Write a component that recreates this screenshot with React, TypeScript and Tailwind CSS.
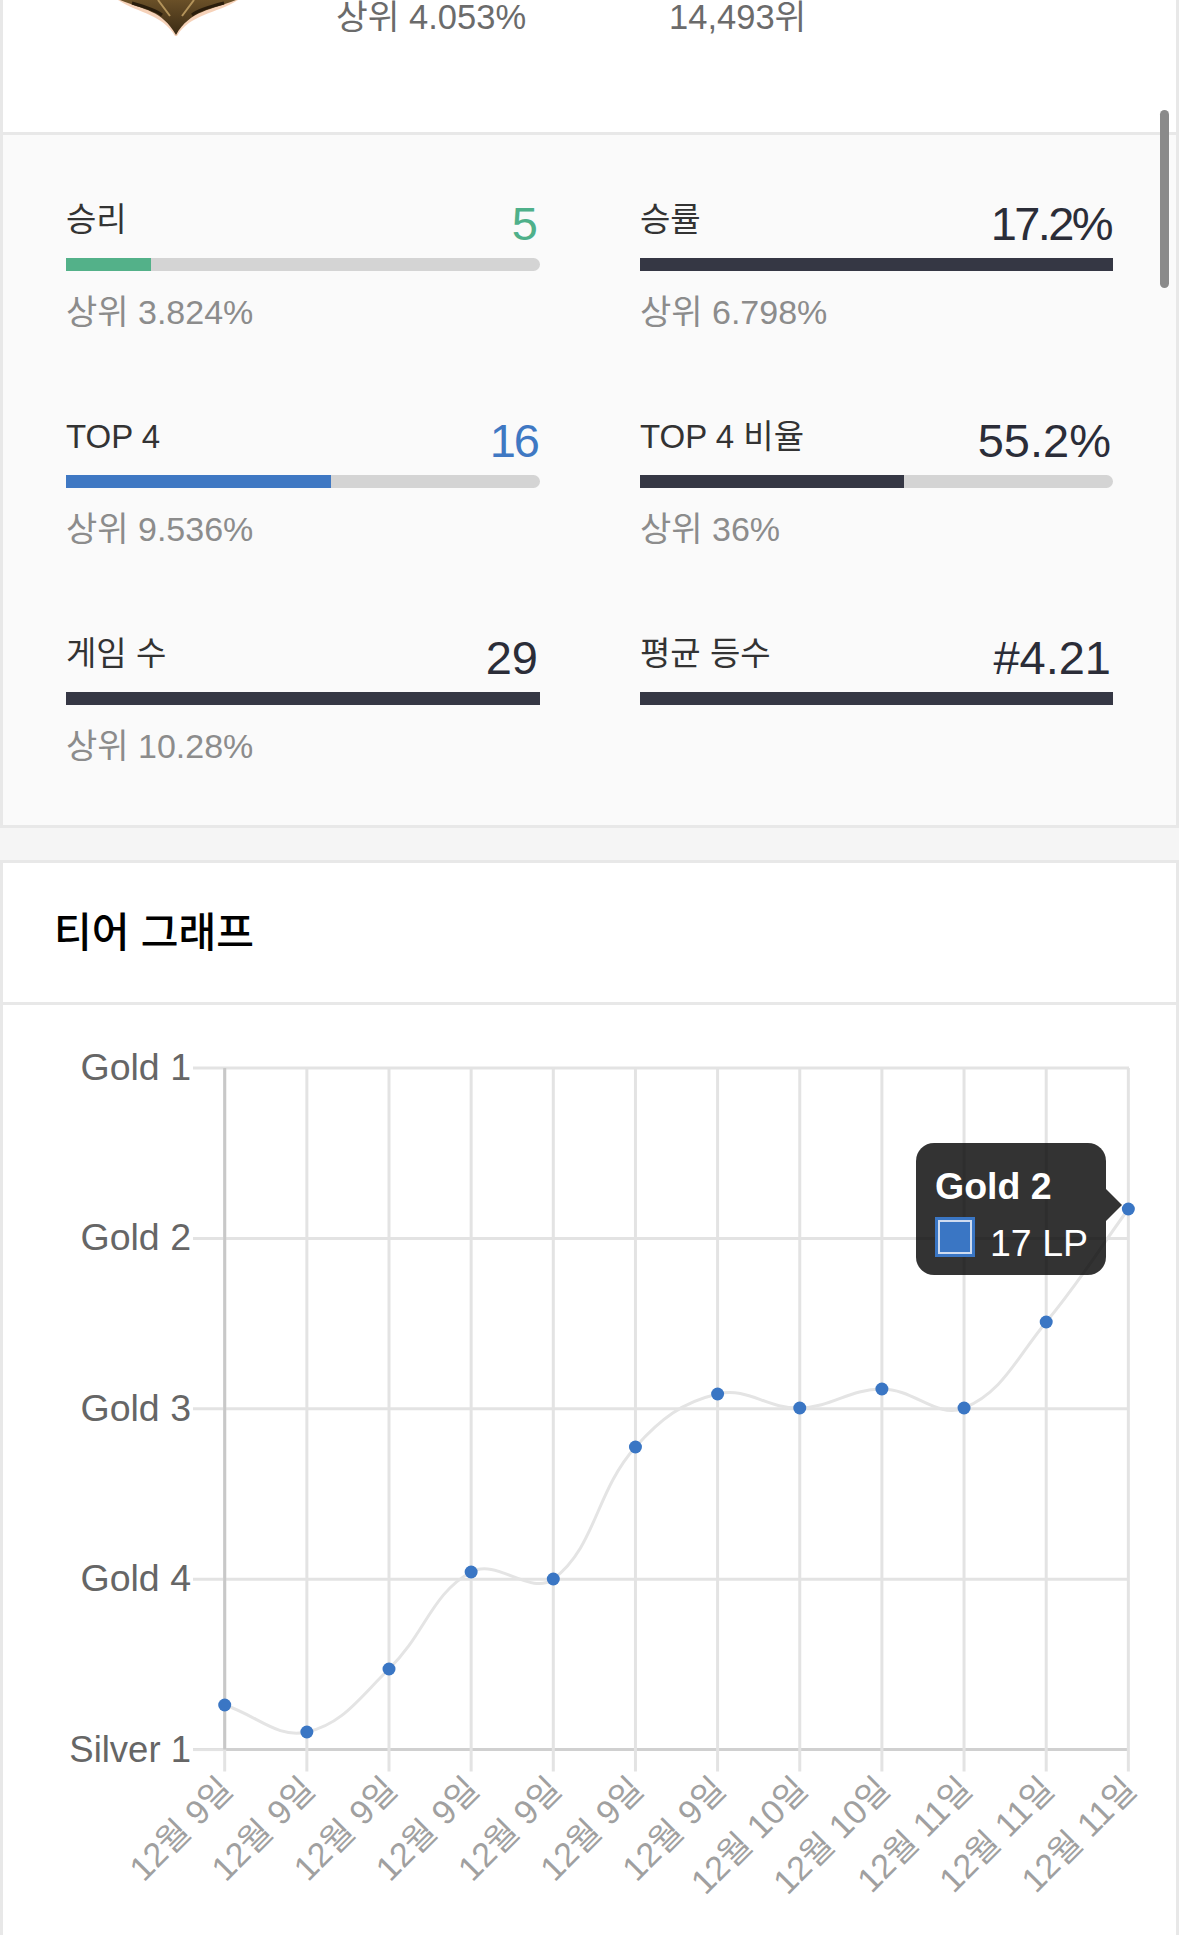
const stats = [
  { label: '승리', value: '5', color: 'text-[#4fb08a]', bar: 'bg-[#53b189]', width: '18%', sub: '상위 3.824%' },
  { label: '승률', value: '17.2%', color: 'text-[#2b2d38] tracking-[-2.6px]', bar: 'bg-[#353744]', width: '100%', sub: '상위 6.798%' },
  { label: 'TOP 4', value: '16', color: 'text-[#3f78c3] tracking-[-2px]', bar: 'bg-[#3f78c3]', width: '56%', sub: '상위 9.536%' },
  { label: 'TOP 4 비율', value: '55.2%', color: 'text-[#2b2d38]', bar: 'bg-[#353744]', width: '55.8%', sub: '상위 36%' },
  { label: '게임 수', value: '29', color: 'text-[#2b2d38]', bar: 'bg-[#353744]', width: '100%', sub: '상위 10.28%' },
  { label: '평균 등수', value: '#4.21', color: 'text-[#2b2d38]', bar: 'bg-[#353744]', width: '100%', sub: '' },
]

const tiers = ['Gold 1', 'Gold 2', 'Gold 3', 'Gold 4', 'Silver 1']
const dates = ['12월 9일', '12월 9일', '12월 9일', '12월 9일', '12월 9일', '12월 9일', '12월 9일', '12월 10일', '12월 10일', '12월 11일', '12월 11일', '12월 11일']

// chart drawing coords, y is relative to the top of the svg (page y 1005)
const top = 63
const rowH = 170.4
const xs = dates.map((_, i) => 224.7 + i * 82.15)
const ys = [1705, 1732, 1669, 1572, 1579, 1447, 1394, 1408, 1389, 1408, 1322, 1209].map((y) => y - 1005)
const bottom = top + rowH * 4

// same bezier as chart.js tension 0.4
function linePath() {
  const t = 0.4
  const ctrl = xs.map((x, i) => {
    const px = xs[Math.max(i - 1, 0)], py = ys[Math.max(i - 1, 0)]
    const nx = xs[Math.min(i + 1, xs.length - 1)], ny = ys[Math.min(i + 1, xs.length - 1)]
    const y = ys[i]
    const d1 = Math.hypot(x - px, y - py)
    const d2 = Math.hypot(nx - x, ny - y)
    const sum = d1 + d2 || 1
    const fa = (t * d1) / sum
    const fb = (t * d2) / sum
    return {
      p: [x - fa * (nx - px), y - fa * (ny - py)],
      n: [x + fb * (nx - px), y + fb * (ny - py)],
    }
  })
  let d = `M${xs[0]} ${ys[0]}`
  for (let i = 1; i < xs.length; i++) {
    d += ` C${ctrl[i - 1].n[0]} ${ctrl[i - 1].n[1]} ${ctrl[i].p[0]} ${ctrl[i].p[1]} ${xs[i]} ${ys[i]}`
  }
  return d
}

function TierChart() {
  return (
    <svg width="1173" height="930" viewBox="3 0 1173 930" className="block">
      {tiers.map((tier, i) => (
        <g key={tier}>
          <line x1="193" x2="1129" y1={top + i * rowH} y2={top + i * rowH} stroke={i === 4 ? '#d0d0d0' : '#e3e3e3'} strokeWidth="3" />
          <text x="191" y={top + i * rowH + 12} textAnchor="end" fontSize={i === 4 ? 36.5 : 37.5} fill="#666">
            {tier}
          </text>
        </g>
      ))}
      <line x1="193" x2="225" y1={bottom} y2={bottom} stroke="#e3e3e3" strokeWidth="3" />
      {xs.map((x, i) => (
        <g key={i}>
          <line x1={x} x2={x} y1={top} y2={bottom + 22} stroke="#e3e3e3" strokeWidth="3" />
          {i === 0 && <line x1={x} x2={x} y1={top} y2={bottom} stroke="#c8c8c8" strokeWidth="3" />}
          <text
            x={x + 10}
            y={bottom + 42}
            textAnchor="end"
            fontSize="34"
            fill="#a0a0a0"
            transform={`rotate(-45 ${x + 10} ${bottom + 42})`}
          >
            {dates[i]}
          </text>
        </g>
      ))}
      <path d={linePath()} fill="none" stroke="#e4e4e4" strokeWidth="3" />
      {xs.map((x, i) => (
        <circle key={i} cx={x} cy={ys[i]} r="6.5" fill="#3a76c4" />
      ))}
    </svg>
  )
}

function Tooltip() {
  return (
    <div className="absolute left-[916px] top-[1143px] w-[190px] h-[132px] rounded-[18px] bg-[rgba(0,0,0,0.8)] text-white">
      <div className="absolute left-full top-[46px] w-0 h-0 border-y-[16px] border-y-transparent border-l-[16px] border-l-[rgba(0,0,0,0.8)]" />
      <div className="pl-[19px] pt-[20px] text-[37.5px] leading-[46px] font-bold">Gold 2</div>
      <div className="flex items-start pl-[19px] mt-[8px]">
        <span className="w-[40px] h-[40px] bg-[#3a76c4] border-[3px] border-[#3a76c4] outline outline-[2px] -outline-offset-[5px] outline-[#cfdcf0]" />
        <span className="ml-[15px] mt-[3px] text-[37.5px] leading-[46px]">17 LP</span>
      </div>
    </div>
  )
}

export default function App() {
  return (
    <div className="relative w-[1179px] h-[1935px] overflow-hidden bg-[#f5f5f5] font-['Liberation_Sans','Noto_Sans_CJK_KR',sans-serif]">
      <section className="h-[135px] bg-white border-x-[3px] border-b-[3px] border-[#e8e8e8] flex">
        <svg width="180" height="50" viewBox="0 0 180 50" className="ml-[87px] shrink-0 self-start">
          <defs>
            <linearGradient id="emblem" x1="0" y1="0" x2="0" y2="1">
              <stop offset="0" stopColor="#6a5028" />
              <stop offset="1" stopColor="#3a2a14" />
            </linearGradient>
          </defs>
          <path d="M28 0 C50 14 72 14 85 36 L87 36 C100 14 126 14 148 0 Z" fill="#f0b48a" opacity="0.6" />
          <path d="M30 0 C54 10 72 10 86 35 C100 10 122 10 146 0 Z" fill="url(#emblem)" />
          <path d="M68 0 L80 16 M104 0 L92 16" stroke="#b3935a" strokeWidth="2" fill="none" />
          <path d="M42 3 C56 7 66 10 72 15 M134 3 C118 7 108 10 102 15" stroke="#2a1d0c" strokeWidth="3" fill="none" />
        </svg>
        <div className="ml-[66px] text-[34.5px] leading-[34px] text-[#6b6b6b]">상위 4.053%</div>
        <div className="ml-[143px] text-[34.5px] leading-[34px] text-[#6b6b6b]">14,493위</div>
      </section>

      <section className="h-[693px] bg-[#fafafa] border-x-[3px] border-b-[3px] border-[#e8e8e8] pt-[67px] pl-[63px]">
        <div className="grid grid-cols-[474px_473px] gap-x-[100px] gap-y-[84px]">
          {stats.map((s) => (
            <div key={s.label}>
              <div className="h-[56px] flex justify-between items-start">
                <span className="text-[33px] leading-[36px] text-[#333]">{s.label}</span>
                <span className={`text-[47px] leading-[43px] pr-[2px] ${s.color}`}>{s.value}</span>
              </div>
              <div className="relative h-[13px] rounded-r-full bg-[#d4d4d4]">
                <div className={`h-full ${s.bar}`} style={{ width: s.width }} />
              </div>
              <div className="mt-[18px] h-[46px] text-[34px] leading-[46px] text-[#8c8c8c]">{s.sub}</div>
            </div>
          ))}
        </div>
      </section>

      <section className="mt-[32px] bg-white border-x-[3px] border-t-[3px] border-[#e8e8e8]">
        <h2 className="h-[142px] border-b-[3px] border-[#e8e8e8] pl-[51px] pt-[2px] flex items-center text-[41px] font-medium text-black">
          티어 그래프
        </h2>
        <TierChart />
      </section>

      <Tooltip />
      <div className="absolute left-[1160px] top-[110px] w-[9px] h-[178px] rounded-full bg-[#8a8a8a]" />
    </div>
  )
}
